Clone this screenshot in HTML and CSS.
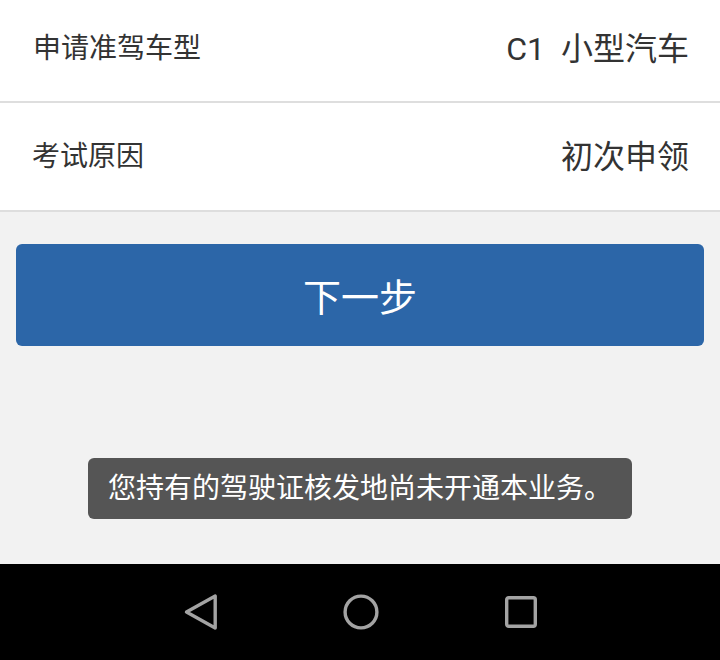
FILE: index.html
```
<!DOCTYPE html>
<html lang="zh-CN">
<head>
<meta charset="utf-8">
<title>申请准驾车型</title>
<link rel="stylesheet" href="styles.css">
</head>
<body>
<div class="screen">
  <main class="content">
    <div class="row row-first">
      <span class="label">申请准驾车型</span>
      <span class="value"><span class="code">C1</span>小型汽车</span>
    </div>
    <div class="row row-second">
      <span class="label">考试原因</span>
      <span class="value">初次申领</span>
    </div>
    <div class="actions">
      <button class="btn-next" type="button">下一步</button>
    </div>
    <div class="toast">您持有的驾驶证核发地尚未开通本业务。</div>
  </main>
  <nav class="navbar">
    <svg class="nav-icon" viewBox="0 0 40 40" width="40" height="40"><polygon points="34.2,4 34.2,36 5.5,20" fill="none" stroke="#a3a3a3" stroke-width="3.4" stroke-linejoin="round"/></svg>
    <svg class="nav-icon" viewBox="0 0 40 40" width="40" height="40"><circle cx="20" cy="20" r="15.9" fill="none" stroke="#a3a3a3" stroke-width="3.4"/></svg>
    <svg class="nav-icon" viewBox="0 0 40 40" width="40" height="40"><rect x="5.7" y="5.7" width="28.6" height="28.6" rx="2" fill="none" stroke="#a3a3a3" stroke-width="3.4"/></svg>
  </nav>
</div>
</body>
</html>
```
FILE: styles.css
```
* { box-sizing: border-box; }
html, body { margin: 0; padding: 0; }
body {
  background: #f2f2f2;
  font-family: "Roboto", "Noto Sans CJK SC", sans-serif;
  color: #333;
}
.screen {
  width: 720px;
  height: 660px;
  display: flex;
  flex-direction: column;
  overflow: hidden;
}
.content {
  flex: 1;
  position: relative;
  background: #f2f2f2;
}
.row {
  display: flex;
  align-items: center;
  justify-content: space-between;
  background: #fff;
  border-bottom: 2px solid #dedede;
  padding: 0 31px 0 32px;
}
.row-first { height: 103px; padding-bottom: 4px; }
.row-second { height: 109px; }
.label {
  font-size: 28px;
  line-height: 1;
  color: #333;
}
.row-first .label { padding-left: 1px; }
.value {
  font-size: 32px;
  line-height: 1;
  color: #333;
}
.code {
  font-family: "Roboto", sans-serif;
  margin-right: 16px;
}
.actions {
  padding: 32px 16px 0;
}
.btn-next {
  display: block;
  width: 100%;
  height: 102px;
  border: none;
  border-radius: 6px;
  background: #2c66a8;
  color: #fff;
  font-family: "Roboto", "Noto Sans CJK SC", sans-serif;
  font-size: 38px;
  padding: 0 0 2px;
}
.toast {
  position: absolute;
  top: 458px;
  left: 50%;
  transform: translateX(-50%);
  width: 544px;
  height: 61px;
  padding: 0 20px;
  display: flex;
  align-items: center;
  background: #555;
  color: #fff;
  border-radius: 6px;
  font-size: 28px;
  line-height: 1;
  white-space: nowrap;
}
.navbar {
  height: 96px;
  background: #000;
  display: flex;
  align-items: center;
  justify-content: center;
  gap: 120px;
  padding-left: 2px;
}
.nav-icon { display: block; }
```
